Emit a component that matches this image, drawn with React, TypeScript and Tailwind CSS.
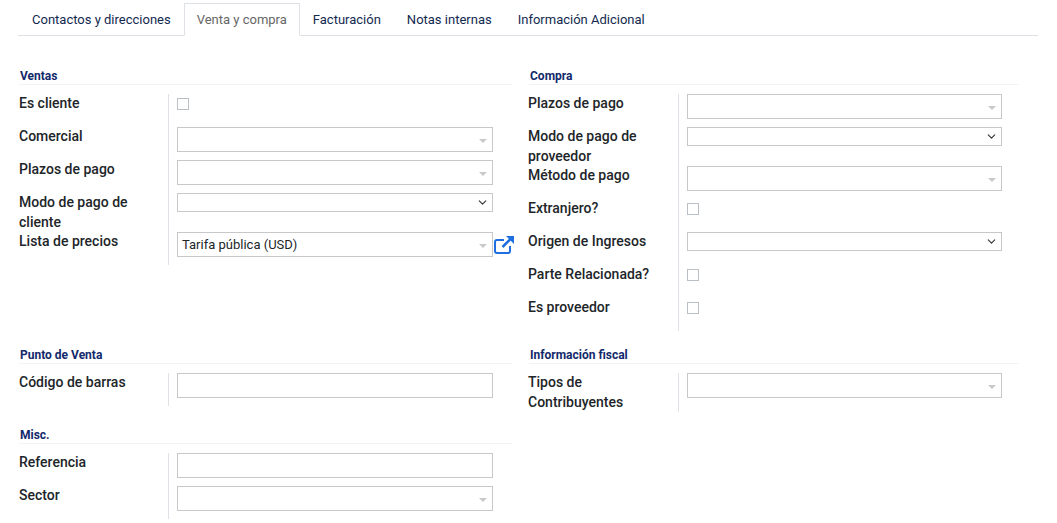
import { ChevronDown } from 'lucide-react';

const tabs = ['Contactos y direcciones', 'Venta y compra', 'Facturación', 'Notas internas', 'Información Adicional'];

// Odoo-style field row: label cell + value cell with a left rule
function Row({ label, h, children, narrow }: { label: string; h: number; children: React.ReactNode; narrow?: boolean }) {
  return (
    <div className={`flex ${h === 39 ? 'h-[39px]' : 'h-[33px]'}`}>
      <div className={`shrink-0 font-medium text-[14px] leading-[20px] -mt-px text-[#212529] ${narrow ? 'w-[150px]' : 'w-[149px]'}`}>
        {label}
      </div>
      <div className="border-l border-[#dee2e6] pl-2 flex-1 self-stretch">{children}</div>
    </div>
  );
}

function Many2one({ value, w }: { value?: string; w: string }) {
  return (
    <div className={`h-[25px] border border-[#c8c8c8] flex items-center justify-between pl-[4px] pr-[5px] text-[13px] text-[#212529] ${w}`}>
      <span>{value}</span>
      <span className="w-0 h-0 border-x-[4px] border-x-transparent border-t-[4px] border-t-[#c9c9c9] mt-[3px]" />
    </div>
  );
}

function Select({ w }: { w: string }) {
  return (
    <div className={`h-[19px] border border-[#c8c8c8] flex items-center justify-end pr-[3px] ${w}`}>
      <ChevronDown size={13} strokeWidth={2} className="text-[#333]" />
    </div>
  );
}

function Text({ w }: { w: string }) {
  return <div className={`h-[25px] border border-[#c8c8c8] ${w}`} />;
}

function Check() {
  return <div className="mt-1 w-3 h-3 border border-[#b9bfc5] bg-white" />;
}

function Title({ children }: { children: React.ReactNode }) {
  return (
    <div className="h-[19px] text-[12px] font-bold leading-[20px] text-[#12296b] pl-px border-b border-[#f3f3f3]">
      {children}
    </div>
  );
}

function OpenIcon() {
  return (
    <svg width="22" height="20" viewBox="0 0 22 20" fill="none" className="absolute left-[316px] top-[3px] text-[#1f6fe0]" stroke="currentColor">
      <path d="M11 5H4a2 2 0 0 0-2 2v9a2 2 0 0 0 2 2h11a2 2 0 0 0 2-2v-5" strokeWidth="2" />
      <path d="M9.5 12 18 3.5" strokeWidth="2.6" />
      <path d="M13 1h8v8z" fill="currentColor" stroke="none" />
    </svg>
  );
}

export default function App() {
  return (
    <div className="w-[1057px] h-[523px] overflow-hidden bg-white font-['Roboto',sans-serif] pt-[3px] pl-[18px]">
      <div className="w-[1020px] h-[33px] border-b border-[#dee2e6] flex pl-px">
        {tabs.map((t, i) => (
          <div
            key={t}
            className={
              i === 1
                ? 'h-[33px] px-3 text-[13px] leading-[32px] text-[#666] border border-[#dee2e6] border-b-white bg-white'
                : 'h-[32px] px-[13px] text-[13px] leading-[34px] text-[#12294f]'
            }
          >
            {t}
          </div>
        ))}
      </div>

      <div className="flex mt-[30px]">
        <div className="w-[493px] shrink-0 ml-px">
          <Title>Ventas</Title>
          <div className="mt-[9px]">
            <Row label="Es cliente" h={33}><Check /></Row>
            <Row label="Comercial" h={33}><Many2one w="w-[316px]" /></Row>
            <Row label="Plazos de pago" h={33}><Many2one w="w-[316px]" /></Row>
            <Row label="Modo de pago de cliente" h={39}><Select w="w-[316px]" /></Row>
            <Row label="Lista de precios" h={33}>
              <div className="relative">
                <Many2one w="w-[316px]" value="Tarifa pública (USD)" />
                <OpenIcon />
              </div>
            </Row>
          </div>

          <div className="mt-[80px]"><Title>Punto de Venta</Title></div>
          <div className="mt-[9px]">
            <Row label="Código de barras" h={33}><Text w="w-[316px]" /></Row>
          </div>

          <div className="mt-[19px]"><Title>Misc.</Title></div>
          <div className="mt-[9px]">
            <Row label="Referencia" h={33}><Text w="w-[316px]" /></Row>
            <Row label="Sector" h={33}><Many2one w="w-[316px]" /></Row>
          </div>
        </div>

        <div className="w-[490px] shrink-0 ml-[17px]">
          <Title>Compra</Title>
          <div className="mt-[9px] -ml-px">
            <Row narrow label="Plazos de pago" h={33}><Many2one w="w-[315px]" /></Row>
            <Row narrow label="Modo de pago de proveedor" h={39}><Select w="w-[315px]" /></Row>
            <Row narrow label="Método de pago" h={33}><Many2one w="w-[315px]" /></Row>
            <Row narrow label="Extranjero?" h={33}><Check /></Row>
            <Row narrow label="Origen de Ingresos" h={33}><Select w="w-[315px]" /></Row>
            <Row narrow label="Parte Relacionada?" h={33}><Check /></Row>
            <Row narrow label="Es proveedor" h={33}><Check /></Row>
          </div>

          <div className="mt-[14px]"><Title>Información fiscal</Title></div>
          <div className="mt-[9px] -ml-px">
            <Row narrow label="Tipos de Contribuyentes" h={39}><Many2one w="w-[315px]" /></Row>
          </div>
        </div>
      </div>
    </div>
  );
}
